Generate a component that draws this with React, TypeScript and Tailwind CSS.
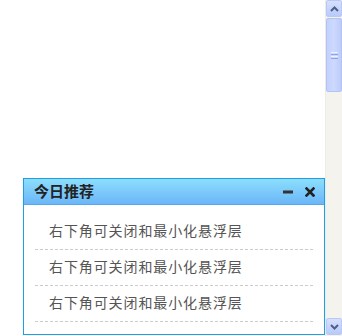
const items = ['右下角可关闭和最小化悬浮层', '右下角可关闭和最小化悬浮层', '右下角可关闭和最小化悬浮层'];

// XP 风格滚动条
function ScrollBar() {
    return (
        <div className="flex w-[17px] shrink-0 flex-col bg-[#f4f3ee] border-l border-[#ecebe5]">
            <div className="flex h-[17px] items-center justify-center rounded-[2px] border border-[#b9c8f4] bg-gradient-to-b from-[#d6e0fd] to-[#b9cafa]">
                <svg width="9" height="6" viewBox="0 0 9 6">
                    <path d="M1 5 L4.5 1.5 L8 5" fill="none" stroke="#4d6185" strokeWidth="2" />
                </svg>
            </div>
            <div className="mt-[1px] flex h-[74px] items-center justify-center rounded-[2px] border border-[#b3c3f3] bg-gradient-to-r from-[#c3d1fc] via-[#cdd9fd] to-[#bccbfa]">
                <div className="flex flex-col gap-[1px]">
                    <div className="h-px w-[7px] bg-[#eef2fe]" />
                    <div className="h-px w-[7px] bg-[#8fa5e6]" />
                    <div className="h-px w-[7px] bg-[#eef2fe]" />
                    <div className="h-px w-[7px] bg-[#8fa5e6]" />
                </div>
            </div>
            <div className="flex-1" />
            <div className="mb-px flex h-[17px] items-center justify-center rounded-[2px] border border-[#b9c8f4] bg-gradient-to-b from-[#d6e0fd] to-[#b9cafa]">
                <svg width="9" height="6" viewBox="0 0 9 6">
                    <path d="M1 1 L4.5 4.5 L8 1" fill="none" stroke="#4d6185" strokeWidth="2" />
                </svg>
            </div>
        </div>
    );
}

export default function App() {
    return (
        <div className="flex h-[336px] w-[342px] overflow-hidden bg-white" style={{ fontFamily: '"Liberation Sans", "Noto Sans CJK SC", sans-serif' }}>
            <div className="flex flex-1 flex-col justify-end pl-[23px] pb-px">
                {/* 悬浮层 */}
                <div className="flex h-[157px] w-[302px] flex-col border border-[#1e9fe2] bg-white">
                    <div className="flex h-[26px] items-center justify-between border-b border-[#56a8ec] bg-gradient-to-b from-[#8cdefd] to-[#6cb6f8] pl-[10px] pr-[9px]">
                        <span className="text-[15px] font-bold leading-none text-[#222]">今日推荐</span>
                        <div className="flex items-center gap-[12px]">
                            <svg width="10" height="4" viewBox="0 0 10 4">
                                <rect x="0" y="0.5" width="10" height="3" fill="#333" />
                            </svg>
                            <svg width="10" height="10" viewBox="0 0 10 10">
                                <path d="M1.5 1.5 L8.5 8.5 M8.5 1.5 L1.5 8.5" stroke="#222" strokeWidth="2.6" strokeLinecap="square" />
                            </svg>
                        </div>
                    </div>
                    <div className="px-[11px] pt-[9px]">
                        {items.map((t, i) => (
                            <div key={i} className="flex h-[36px] items-center border-b border-dashed border-[#cccccc] pl-[14px] text-[14px] tracking-[0.9px] text-[#555]">
                                {t}
                            </div>
                        ))}
                    </div>
                </div>
            </div>
            <ScrollBar />
        </div>
    );
}
